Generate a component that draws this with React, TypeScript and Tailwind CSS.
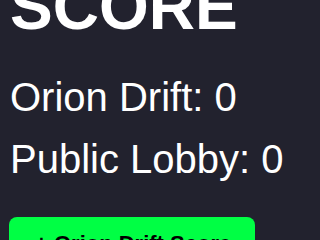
export default function App() {
  return (
    <div className="h-[240px] w-[320px] overflow-hidden bg-[#22222e] text-white" style={{ fontFamily: '"Liberation Sans", Arial, sans-serif' }}>
      <div className="mt-[-25px] flex flex-col items-start pl-[10px]">
        <h1 className="text-[64px] font-bold leading-none">SCORE</h1>
        <p className="mt-[38px] text-[40px] leading-none">Orion Drift: 0</p>
        <p className="mt-[22px] text-[40px] leading-none">Public Lobby: 0</p>
        <button className="mt-[38px] ml-[-1px] flex h-[64px] w-[246px] items-start rounded-[8px] bg-[#00ff44] pl-[26px] pt-[13px] text-[22px] font-bold leading-[28px] text-black">
          + Orion Drift Score
        </button>
      </div>
    </div>
  );
}
